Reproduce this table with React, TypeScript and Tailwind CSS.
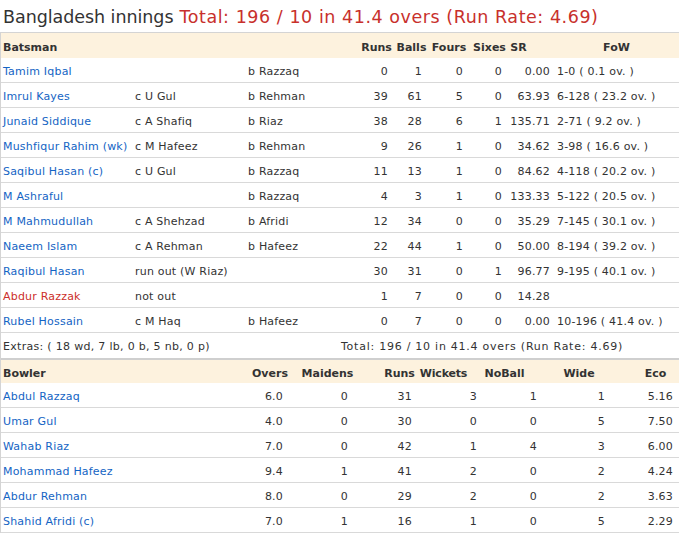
import React from "react";

type Batter = {
    name: string;
    how: string;
    bowler: string;
    r: string;
    b: string;
    f: string;
    s: string;
    sr: string;
    fow: string;
    red?: boolean;
};

const batting: Batter[] = [
    { name: "Tamim Iqbal", how: "", bowler: "b Razzaq", r: "0", b: "1", f: "0", s: "0", sr: "0.00", fow: "1-0 ( 0.1 ov. )" },
    { name: "Imrul Kayes", how: "c U Gul", bowler: "b Rehman", r: "39", b: "61", f: "5", s: "0", sr: "63.93", fow: "6-128 ( 23.2 ov. )" },
    { name: "Junaid Siddique", how: "c A Shafiq", bowler: "b Riaz", r: "38", b: "28", f: "6", s: "1", sr: "135.71", fow: "2-71 ( 9.2 ov. )" },
    { name: "Mushfiqur Rahim (wk)", how: "c M Hafeez", bowler: "b Rehman", r: "9", b: "26", f: "1", s: "0", sr: "34.62", fow: "3-98 ( 16.6 ov. )" },
    { name: "Saqibul Hasan (c)", how: "c U Gul", bowler: "b Razzaq", r: "11", b: "13", f: "1", s: "0", sr: "84.62", fow: "4-118 ( 20.2 ov. )" },
    { name: "M Ashraful", how: "", bowler: "b Razzaq", r: "4", b: "3", f: "1", s: "0", sr: "133.33", fow: "5-122 ( 20.5 ov. )" },
    { name: "M Mahmudullah", how: "c A Shehzad", bowler: "b Afridi", r: "12", b: "34", f: "0", s: "0", sr: "35.29", fow: "7-145 ( 30.1 ov. )" },
    { name: "Naeem Islam", how: "c A Rehman", bowler: "b Hafeez", r: "22", b: "44", f: "1", s: "0", sr: "50.00", fow: "8-194 ( 39.2 ov. )" },
    { name: "Raqibul Hasan", how: "run out (W Riaz)", bowler: "", r: "30", b: "31", f: "0", s: "1", sr: "96.77", fow: "9-195 ( 40.1 ov. )" },
    { name: "Abdur Razzak", how: "not out", bowler: "", r: "1", b: "7", f: "0", s: "0", sr: "14.28", fow: "", red: true },
    { name: "Rubel Hossain", how: "c M Haq", bowler: "b Hafeez", r: "0", b: "7", f: "0", s: "0", sr: "0.00", fow: "10-196 ( 41.4 ov. )" },
];

const bowling = [
    ["Abdul Razzaq", "6.0", "0", "31", "3", "1", "1", "5.16"],
    ["Umar Gul", "4.0", "0", "30", "0", "0", "5", "7.50"],
    ["Wahab Riaz", "7.0", "0", "42", "1", "4", "3", "6.00"],
    ["Mohammad Hafeez", "9.4", "1", "41", "2", "0", "2", "4.24"],
    ["Abdur Rehman", "8.0", "0", "29", "2", "0", "2", "3.63"],
    ["Shahid Afridi (c)", "7.0", "1", "16", "1", "0", "5", "2.29"],
];

const batCols = "grid grid-cols-[130px_113px_114px_35px_36px_40px_39px_45px_126px]";
const bowlCols = "grid grid-cols-[239px_55px_60px_60px_65px_60px_68px_71px]";

// header padding shifts each label to where the reference centres it
const bowlHead = [
    { label: "Overs", cls: "pl-[5px]" },
    { label: "Maidens", cls: "pl-[5px]" },
    { label: "Runs", cls: "pl-[29px]" },
    { label: "Wickets", cls: "pr-[8px] tracking-[-0.2px]" },
    { label: "NoBall", cls: "pr-[11px]" },
    { label: "Wide", cls: "pl-[10px]" },
    { label: "Eco", cls: "pl-[24px]" },
];
const bowlVal = ["pr-[12px]", "pr-[7px]", "pr-[3px]", "pr-[3px]", "pr-[3px]", "pr-[3px]", "pr-[6px]"];

const row = "h-[25px] pt-[4px] items-center border-b border-[#d9d9d9]";
const head = "h-[25px] pt-[6px] items-center bg-[#fdf2de] font-bold tracking-normal";

export default function App() {
    return (
        <div className="w-[679px] h-[533px] overflow-hidden bg-white text-[#333] font-['DejaVu_Sans','Verdana',sans-serif] text-[11px] tracking-[0.2px]">
            <h1 className="h-[32px] flex items-center pt-[2px] pl-[3px] text-[17.5px] tracking-normal whitespace-nowrap">
                <span className="text-[#333] tracking-[-0.05px]">Bangladesh innings</span>
                <span className="text-[#c8302c] ml-[6px] tracking-[0.55px]">Total: 196 / 10 in 41.4 overs (Run Rate: 4.69)</span>
            </h1>

            <div className="border-l border-t border-[#d4d4d4]">
                <div className={`${batCols} ${head}`}>
                    <div className="pl-[2px]">Batsman</div>
                    <div />
                    <div />
                    <div className="text-center pl-[2px]">Runs</div>
                    <div className="text-center pl-[1px]">Balls</div>
                    <div className="text-center">Fours</div>
                    <div className="text-center pl-[2px]">Sixes</div>
                    <div className="text-center pr-[24px]">SR</div>
                    <div className="text-center pl-[1px]">FoW</div>
                </div>

                {batting.map((p) => (
                    <div key={p.name} className={`${batCols} ${row} whitespace-nowrap`}>
                        <div className={`pl-[2px] ${p.red ? "text-[#cc2f2b]" : "text-[#1464c4]"}`}>{p.name}</div>
                        <div className="pl-[4px]">{p.how}</div>
                        <div className="pl-[4px]">{p.bowler}</div>
                        <div className="text-right pr-[5px]">{p.r}</div>
                        <div className="text-right pr-[7px]">{p.b}</div>
                        <div className="text-right pr-[6px]">{p.f}</div>
                        <div className="text-right pr-[6px]">{p.s}</div>
                        <div className="text-right pr-[3px]">{p.sr}</div>
                        <div className="pl-[4px]">{p.fow}</div>
                    </div>
                ))}

                <div className="grid grid-cols-[340px_1fr] h-[25px] pt-[4px] items-center whitespace-nowrap">
                    <div className="pl-[2px] tracking-[0.3px]">Extras: ( 18 wd, 7 lb, 0 b, 5 nb, 0 p)</div>
                    <div className="tracking-[0.75px]">Total: 196 / 10 in 41.4 overs (Run Rate: 4.69)</div>
                </div>

                <div className={`${bowlCols} ${head} border-t-2 border-[#cfcfcf]`}>
                    <div className="pl-[2px]">Bowler</div>
                    {bowlHead.map((h) => (
                        <div key={h.label} className={`text-center ${h.cls}`}>{h.label}</div>
                    ))}
                </div>

                {bowling.map(([name, ...vals]) => (
                    <div key={name} className={`${bowlCols} ${row} whitespace-nowrap`}>
                        <div className="pl-[2px] text-[#1464c4]">{name}</div>
                        {vals.map((v, i) => (
                            <div key={i} className={`text-right ${bowlVal[i]}`}>{v}</div>
                        ))}
                    </div>
                ))}
            </div>
        </div>
    );
}
